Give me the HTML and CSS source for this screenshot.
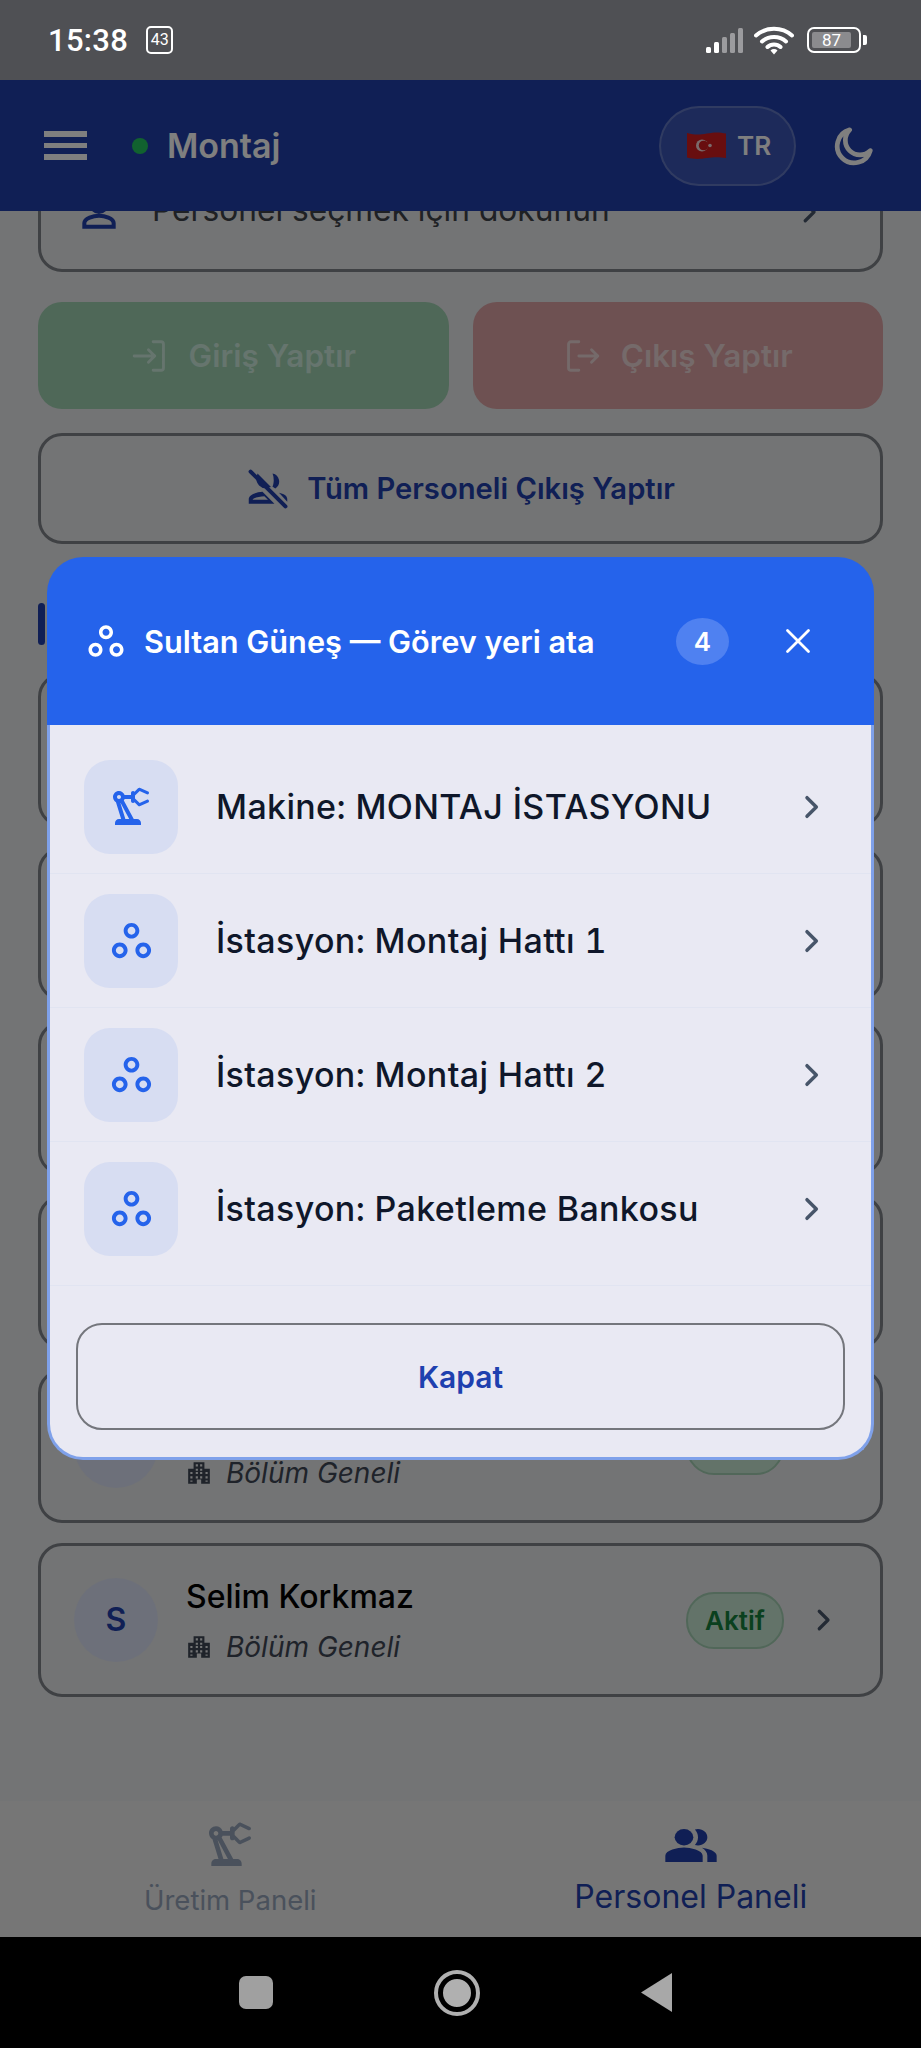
FILE: index.html
```html
<!DOCTYPE html>
<html lang="tr">
<head>
    <meta charset="UTF-8">
    <meta name="viewport" content="width=device-width, initial-scale=1.0">
    <title>Montaj</title>
    <link rel="stylesheet" href="styles.css">
</head>
<body>
<svg class="icon-defs" width="0" height="0">
    <symbol id="i-robot" viewBox="0 0 24 24"><path d="M19.93 8.35l-3.6 1.68L14 7.7V6.3l2.33-2.33 3.6 1.68c.38.18.82.01 1-.36.18-.38.01-.82-.36-1l-3.92-1.83c-.38-.18-.83-.1-1.13.2L13.78 4.4C13.6 4.16 13.32 4 13 4c-.55 0-1 .45-1 1v1H8.82C8.4 4.84 7.3 4 6 4 4.34 4 3 5.34 3 7c0 1.1.6 2.05 1.48 2.58L7.08 18H6c-1.1 0-2 .9-2 2v1h13v-1c0-1.1-.9-2-2-2h-1.62L8.41 8.77c.17-.24.31-.49.41-.77H12v1c0 .55.45 1 1 1 .32 0 .6-.16.78-.4l1.74 1.74c.3.3.75.38 1.13.2l3.92-1.83c.38-.18.54-.62.36-1-.18-.37-.62-.54-1-.36zM6 8c-.55 0-1-.45-1-1s.45-1 1-1 1 .45 1 1-.45 1-1 1zm5.11 10H9.17l-2.46-8h.1l4.3 8z"/></symbol>
    <symbol id="i-rings" viewBox="0 0 24 24"><path d="M6 13c-2.2 0-4 1.8-4 4s1.8 4 4 4 4-1.8 4-4-1.8-4-4-4zm0 6c-1.1 0-2-.9-2-2s.9-2 2-2 2 .9 2 2-.9 2-2 2zm6-16C9.8 3 8 4.8 8 7s1.8 4 4 4 4-1.8 4-4-1.8-4-4-4zm0 6c-1.1 0-2-.9-2-2s.9-2 2-2 2 .9 2 2-.9 2-2 2zm6 4c-2.2 0-4 1.8-4 4s1.8 4 4 4 4-1.8 4-4-1.8-4-4-4zm0 6c-1.1 0-2-.9-2-2s.9-2 2-2 2 .9 2 2-.9 2-2 2z"/></symbol>
    <symbol id="i-chevron" viewBox="0 0 24 24"><path d="M9 5l7 7-7 7" fill="none" stroke="currentColor" stroke-width="2.6" stroke-linecap="round" stroke-linejoin="round"/></symbol>
    <symbol id="i-building" viewBox="0 0 24 24"><path d="M7 2h10v6h5v14h-8v-4h-4v4H2V8h5zm2 2v2h2V4zm4 0v2h2V4zM9 8v2h2V8zm4 0v2h2V8zm-9 3v2h2v-2zm5 0v2h2v-2zm4 0v2h2v-2zm5 0v2h2v-2zM4 15v2h2v-2zm5 0v2h2v-2zm4 0v2h2v-2zm5 0v2h2v-2zM4 19v1h2v-1zm14 0v1h2v-1z"/></symbol>
</svg>

<div class="phone">
    <div class="status-bar">
        <div class="status-left">
            <span class="clock">15:38</span>
            <span class="notif-count">43</span>
        </div>
        <div class="status-right">
            <svg class="signal" width="38" height="25" viewBox="0 0 38 25">
                <rect x="0" y="19" width="5" height="6" rx="1.5" fill="#fff"/>
                <rect x="8" y="14" width="5" height="11" rx="1.5" fill="#fff"/>
                <rect x="16" y="9" width="5" height="16" rx="1.5" fill="#9b9b9e"/>
                <rect x="24" y="5" width="5" height="20" rx="1.5" fill="#9b9b9e"/>
                <rect x="32" y="0" width="5" height="25" rx="1.5" fill="#9b9b9e"/>
            </svg>
            <svg class="wifi" width="40" height="30" viewBox="0 0 40 30">
                <path d="M2 10.5C12 1.5 28 1.5 38 10.5M8 16.5C14.5 10.5 25.5 10.5 32 16.5M13.5 22C17 18.5 23 18.5 26.5 22" fill="none" stroke="#fff" stroke-width="4" stroke-linecap="round"/>
                <path d="M16.5 25.5a5 5 0 0 1 7 0L20 29.5z" fill="#fff"/>
            </svg>
            <div class="battery">
                <div class="battery-body"><span class="battery-level">87</span></div>
                <div class="battery-tip"></div>
            </div>
        </div>
    </div>

    <div class="app">
        <header class="topbar">
            <div class="hamburger"><span></span><span></span><span></span></div>
            <span class="online-dot"></span>
            <span class="topbar-title">Montaj</span>
            <div class="lang-pill">
                <svg class="flag" width="39" height="27" viewBox="0 0 39 27">
                    <path d="M0 1C8 3 12 3 20 1.5S32 0 39 1.5V26C32 25 27 25 20 26S8 27.5 0 25.5z" fill="#d01c1f"/>
                    <circle cx="15" cy="13.5" r="6" fill="#f4d6d6"/>
                    <circle cx="16.6" cy="13.5" r="4.8" fill="#d01c1f"/>
                    <circle cx="23" cy="13.5" r="1.8" fill="#f4d6d6"/>
                </svg>
                <span class="lang-code">TR</span>
            </div>
            <svg class="moon" width="42" height="42" viewBox="0 0 24 24"><path d="M9.5 2.8a9.6 9.6 0 1 0 11.8 11.8A8 8 0 0 1 9.5 2.8z" fill="none" stroke="#fff" stroke-width="2.7" stroke-linejoin="round"/></svg>
        </header>

        <main class="content">
            <div class="picker">
                <svg class="picker-icon" width="44" height="44" viewBox="0 0 24 24"><path d="M12 4a4 4 0 1 1 0 8 4 4 0 0 1 0-8zm0 10c3 0 8 1.4 8 4v2H4v-2c0-2.6 5-4 8-4z" fill="none" stroke="currentColor" stroke-width="2.2"/></svg>
                <span class="picker-text">Personel seçmek için dokunun</span>
                <svg class="chevron" width="30" height="30"><use href="#i-chevron"/></svg>
            </div>

            <div class="action-row">
                <button class="action-btn btn-in">
                    <svg width="38" height="38" viewBox="0 0 24 24" fill="none" stroke="currentColor" stroke-width="1.8" stroke-linecap="round" stroke-linejoin="round"><path d="M14 3h5a1.5 1.5 0 0 1 1.5 1.5v15A1.5 1.5 0 0 1 19 21h-5M2 12h13M11 8l4 4-4 4"/></svg>
                    Giriş Yaptır
                </button>
                <button class="action-btn btn-out">
                    <svg width="38" height="38" viewBox="0 0 24 24" fill="none" stroke="currentColor" stroke-width="1.8" stroke-linecap="round" stroke-linejoin="round"><path d="M10 3H5a1.5 1.5 0 0 0-1.5 1.5v15A1.5 1.5 0 0 0 5 21h5M10 12h12M18 8l4 4-4 4"/></svg>
                    Çıkış Yaptır
                </button>
            </div>

            <button class="all-out-btn">
                <svg width="44" height="44" viewBox="0 0 24 24"><path d="M2.5 2.5l19 19" stroke="currentColor" stroke-width="2.2" stroke-linecap="round"/><path d="M14.5 3.5a4.5 4.5 0 0 1 1.5 8.2c-.6-.2-1.1-.6-1.6-1 .9-1.6 1-4.8.1-7.2zM9 13.5l6.5 6.5H1.5v-2.500c0-2.300 4-3.800 7.500-4zm1 2.400c-2.400 0-5.800.8-6.400 2H12zM18 14c2.500.5 4.500 1.600 4.500 3.500V19z" fill="currentColor"/><path d="M6.800 5.500a4 4 0 0 0 4.900 4.900z" fill="none" stroke="currentColor" stroke-width="2"/></svg>
                Tüm Personeli Çıkış Yaptır
            </button>

            <div class="section-title"><span class="section-mark"></span></div>

            <div class="person-list">
                <div class="person-card"></div>
                <div class="person-card"></div>
                <div class="person-card"></div>
                <div class="person-card"></div>
                <div class="person-card"><div class="avatar"></div><div class="person-info"><div class="person-name"></div><div class="person-place"><svg width="26" height="26"><use href="#i-building"/></svg><span>Bölüm Geneli</span></div></div><span class="status-pill"></span><svg class="chevron" width="30" height="30"><use href="#i-chevron"/></svg></div>
                <div class="person-card"><div class="avatar">S</div><div class="person-info"><div class="person-name">Selim Korkmaz</div><div class="person-place"><svg width="26" height="26"><use href="#i-building"/></svg><span>Bölüm Geneli</span></div></div><span class="status-pill">Aktif</span><svg class="chevron" width="30" height="30"><use href="#i-chevron"/></svg></div>
            </div>
        </main>

        <nav class="tabbar">
            <div class="tab">
                <svg width="56" height="56"><use href="#i-robot"/></svg>
                <span>Üretim Paneli</span>
            </div>
            <div class="tab tab-active">
                <svg width="56" height="42" viewBox="0 0 24 20.5" preserveAspectRatio="none"><path d="M16.67 11.13C18.04 12.06 19 13.32 19 15v3h4v-3c0-2.18-3.57-3.47-6.33-3.87z"/><circle cx="9" cy="6" r="4"/><path d="M15 10c2.21 0 4-1.79 4-4s-1.79-4-4-4c-.47 0-.91.1-1.33.24C14.5 3.27 15 4.58 15 6s-.5 2.73-1.33 3.76c.42.14.86.24 1.33.24zM9 11c-2.67 0-8 1.34-8 4v3h16v-3c0-2.66-5.33-4-8-4z"/></svg>
                <span>Personel Paneli</span>
            </div>
        </nav>

        <div class="scrim">
            <div class="modal">
                <div class="modal-head">
                    <svg class="modal-head-icon" width="42" height="42"><use href="#i-rings"/></svg>
                    <span class="modal-title">Sultan Güneş — Görev yeri ata</span>
                    <span class="count-badge">4</span>
                    <svg class="close-x" width="28" height="28" viewBox="0 0 24 24"><path d="M3 3l18 18M21 3L3 21" stroke="#fff" stroke-width="2.4" stroke-linecap="round"/></svg>
                </div>
                <div class="modal-body">
                    <div class="place-row">
                        <div class="place-icon"><svg width="48" height="48"><use href="#i-robot"/></svg></div>
                        <span class="place-name">Makine: MONTAJ İSTASYONU</span>
                        <svg class="place-chevron" width="32" height="32"><use href="#i-chevron"/></svg>
                    </div>
                    <div class="place-row">
                        <div class="place-icon"><svg width="47" height="47"><use href="#i-rings"/></svg></div>
                        <span class="place-name">İstasyon: Montaj Hattı 1</span>
                        <svg class="place-chevron" width="32" height="32"><use href="#i-chevron"/></svg>
                    </div>
                    <div class="place-row">
                        <div class="place-icon"><svg width="47" height="47"><use href="#i-rings"/></svg></div>
                        <span class="place-name">İstasyon: Montaj Hattı 2</span>
                        <svg class="place-chevron" width="32" height="32"><use href="#i-chevron"/></svg>
                    </div>
                    <div class="place-row place-row-last">
                        <div class="place-icon"><svg width="47" height="47"><use href="#i-rings"/></svg></div>
                        <span class="place-name">İstasyon: Paketleme Bankosu</span>
                        <svg class="place-chevron" width="32" height="32"><use href="#i-chevron"/></svg>
                    </div>
                    <div class="modal-foot">
                        <button class="close-btn">Kapat</button>
                    </div>
                </div>
            </div>
        </div>
    </div>

    <div class="sys-nav">
        <span class="sys-square"></span>
        <span class="sys-circle"></span>
        <span class="sys-back"></span>
    </div>
</div>
</body>
</html>
```

FILE: styles.css
```css
* {
    box-sizing: border-box;
}

body {
    margin: 0;
    font-family: 'Inter', 'Liberation Sans', sans-serif;
}

.icon-defs {
    position: absolute;
}

.phone {
    display: flex;
    flex-direction: column;
    width: 921px;
    height: 2048px;
    overflow: hidden;
}

/* status bar */
.status-bar {
    display: flex;
    align-items: center;
    justify-content: space-between;
    height: 80px;
    padding: 12px 54px 12px 48px;
    background-color: #4f5054;
    color: #fff;
    font-family: 'Roboto', sans-serif;
}

.status-left {
    display: flex;
    align-items: center;
    gap: 18px;
}

.clock {
    font-size: 31px;
    font-weight: 500;
    letter-spacing: 0.3px;
}

.notif-count {
    width: 27px;
    height: 28px;
    border: 2px solid #fff;
    border-radius: 5px;
    font-size: 16px;
    line-height: 24px;
    text-align: center;
}

.status-right {
    display: flex;
    align-items: center;
    gap: 10px;
}

.battery {
    display: flex;
    align-items: center;
    gap: 2px;
    margin-left: 3px;
}

.battery-body {
    width: 54px;
    height: 26px;
    padding: 3px;
    border: 2.5px solid #fff;
    border-radius: 7px;
}

.battery-level {
    display: block;
    width: 39px;
    height: 100%;
    background-color: #8b8b8e;
    border-radius: 2px;
    font-size: 17px;
    line-height: 16px;
    text-align: center;
}

.battery-tip {
    width: 4px;
    height: 10px;
    background-color: #fff;
    border-radius: 0 2px 2px 0;
}

/* app */
.app {
    position: relative;
    display: flex;
    flex-direction: column;
    flex: 1;
    min-height: 0;
    background-color: #e6e8ea;
}

.topbar {
    position: relative;
    z-index: 2;
    display: flex;
    align-items: center;
    flex-shrink: 0;
    height: 131px;
    padding: 0 46px 0 44px;
    background-color: #203eaa;
    color: #fff;
}

.hamburger {
    display: flex;
    flex-direction: column;
    gap: 6px;
    width: 43px;
}

.hamburger span {
    height: 5.5px;
    background-color: #fff;
}

.online-dot {
    width: 16px;
    height: 16px;
    margin-left: 45px;
    border-radius: 50%;
    background-color: #22c55e;
}

.topbar-title {
    margin-left: 19px;
    font-size: 34px;
    font-weight: 600;
}

.lang-pill {
    display: flex;
    align-items: center;
    gap: 11px;
    width: 137px;
    height: 80px;
    margin-left: auto;
    padding-left: 26px;
    border: 2px solid rgba(255, 255, 255, 0.2);
    border-radius: 40px;
    background-color: rgba(255, 255, 255, 0.12);
}

.lang-code {
    font-size: 26px;
    font-weight: 600;
}

.moon {
    margin-left: 37px;
}

.content {
    flex: 1;
    min-height: 0;
    overflow: hidden;
    padding: 0 38px;
}

.picker {
    display: flex;
    align-items: center;
    height: 120px;
    margin-top: -59px;
    padding: 0 56px 0 36px;
    border: 3px solid #7e8288;
    border-radius: 24px;
}

.picker-icon {
    flex-shrink: 0;
    color: #203eaa;
}

.picker-text {
    margin-left: 31px;
    margin-top: -6px;
    font-size: 31.7px;
    color: #3e4249;
}

.chevron {
    flex-shrink: 0;
    margin-left: auto;
    color: #475569;
}

.action-row {
    display: flex;
    gap: 24px;
    margin-top: 30px;
}

.action-btn {
    display: flex;
    align-items: center;
    justify-content: center;
    gap: 20px;
    flex: 1;
    height: 107px;
    border: none;
    border-radius: 24px;
    font-family: inherit;
    font-size: 31.5px;
    font-weight: 600;
}

.btn-in {
    background-color: #9ed0b0;
    color: #cceadc;
}

.btn-out {
    background-color: #dca2a4;
    color: #ead4d4;
}

.all-out-btn {
    display: flex;
    align-items: center;
    justify-content: center;
    gap: 17px;
    width: 100%;
    height: 111px;
    margin-top: 24px;
    border: 3px solid #7e8288;
    border-radius: 24px;
    background: none;
    color: #203eaa;
    font-family: inherit;
    font-size: 29.2px;
    font-weight: 600;
}

.section-title {
    height: 129px;
    padding-top: 59px;
}

.section-mark {
    display: block;
    width: 7px;
    height: 42px;
    border-radius: 4px;
    background-color: #203eaa;
}

.person-list {
    display: flex;
    flex-direction: column;
    gap: 20px;
}

.person-card {
    display: flex;
    align-items: center;
    flex-shrink: 0;
    height: 154px;
    padding: 0 42px 0 33px;
    border: 3px solid #7e8288;
    border-radius: 24px;
}

.avatar {
    flex-shrink: 0;
    width: 84px;
    height: 84px;
    border-radius: 50%;
    background-color: #dbe1f4;
    color: #203eaa;
    font-size: 32px;
    font-weight: 600;
    line-height: 84px;
    text-align: center;
}

.person-info {
    display: flex;
    flex-direction: column;
    gap: 13px;
    margin-left: 28px;
}

.person-name {
    height: 40px;
    font-size: 32px;
    font-weight: 500;
    color: #000;
}

.person-place {
    display: flex;
    align-items: center;
    gap: 14px;
    color: #3e4654;
    font-size: 28px;
    font-style: italic;
}

.person-place svg {
    fill: currentColor;
}

.status-pill {
    width: 98px;
    height: 57px;
    margin-left: auto;
    border: 2px solid #a2cfb2;
    border-radius: 28px;
    background-color: #c6e6d2;
    color: #15803d;
    font-size: 26px;
    font-weight: 600;
    line-height: 53px;
    text-align: center;
}

.person-card .chevron {
    margin-left: 24px;
}

.tabbar {
    display: flex;
    flex-shrink: 0;
    height: 136px;
    background-color: #ececec;
}

.tab {
    display: flex;
    flex: 1;
    flex-direction: column;
    align-items: center;
    gap: 11px;
    padding-top: 16px;
    color: #94a3b8;
    font-size: 27.5px;
    line-height: 33px;
}

.tab svg {
    fill: currentColor;
}

.tab-active {
    padding-top: 24px;
    color: #203eaa;
    font-size: 32px;
    line-height: 38px;
}

/* modal */
.scrim {
    position: absolute;
    z-index: 3;
    inset: 0;
    display: flex;
    align-items: center;
    justify-content: center;
    background-color: rgba(0, 0, 0, 0.5);
}

.modal {
    width: 827px;
    height: 903px;
}

.modal-head {
    display: flex;
    align-items: center;
    height: 168px;
    padding: 0 62px 0 38px;
    border-radius: 36px 36px 0 0;
    background-color: #2563eb;
    color: #fff;
}

.modal-head-icon {
    flex-shrink: 0;
    fill: #fff;
}

.modal-title {
    margin-left: 17px;
    font-size: 30.7px;
    font-weight: 600;
}

.count-badge {
    width: 53px;
    height: 47px;
    margin-left: auto;
    border-radius: 50%;
    background-color: #4f81f1;
    font-size: 26px;
    font-weight: 600;
    line-height: 47px;
    text-align: center;
}

.close-x {
    margin-left: 55px;
}

.modal-body {
    height: 735px;
    padding-top: 15px;
    border: 3px solid #7fa1ea;
    border-top: none;
    border-radius: 0 0 36px 36px;
    background-color: #e9e9f3;
}

.place-row {
    display: flex;
    align-items: center;
    height: 134px;
    padding: 0 44px 0 34px;
    border-bottom: 1px solid #e1e4f1;
}

.place-row-last {
    height: 144px;
    padding-bottom: 10px;
}

.place-icon {
    display: flex;
    align-items: center;
    justify-content: center;
    width: 94px;
    height: 94px;
    border-radius: 26px;
    background-color: #d7ddf2;
    fill: #2563eb;
}

.place-name {
    margin-left: 38px;
    font-size: 34px;
    font-weight: 550;
    letter-spacing: 0.35px;
    font-variant-numeric: tabular-nums;
    color: #0f172a;
}

.place-chevron {
    margin-left: auto;
    color: #475569;
}

.modal-foot {
    padding: 37px 26px 0;
}

.close-btn {
    width: 100%;
    height: 107px;
    border: 2.5px solid #74767c;
    border-radius: 26px;
    background: none;
    color: #1e40af;
    font-family: inherit;
    font-size: 30px;
    font-weight: 600;
}

/* android nav */
.sys-nav {
    display: flex;
    align-items: center;
    flex-shrink: 0;
    height: 111px;
    padding: 0 0 0 239px;
    background-color: #000;
}

.sys-square {
    width: 34px;
    height: 33px;
    border-radius: 7px;
    background-color: #a0a0a0;
}

.sys-circle {
    width: 46px;
    height: 46px;
    margin-left: 161px;
    border: 4px solid #b0b0b0;
    outline: 5px solid #000;
    outline-offset: -9px;
    border-radius: 50%;
    background-color: #b0b0b0;
}

.sys-back {
    width: 31px;
    height: 39px;
    margin-left: 161px;
    background-color: #a8a8a8;
    clip-path: polygon(100% 0, 100% 100%, 0 50%);
}
```
